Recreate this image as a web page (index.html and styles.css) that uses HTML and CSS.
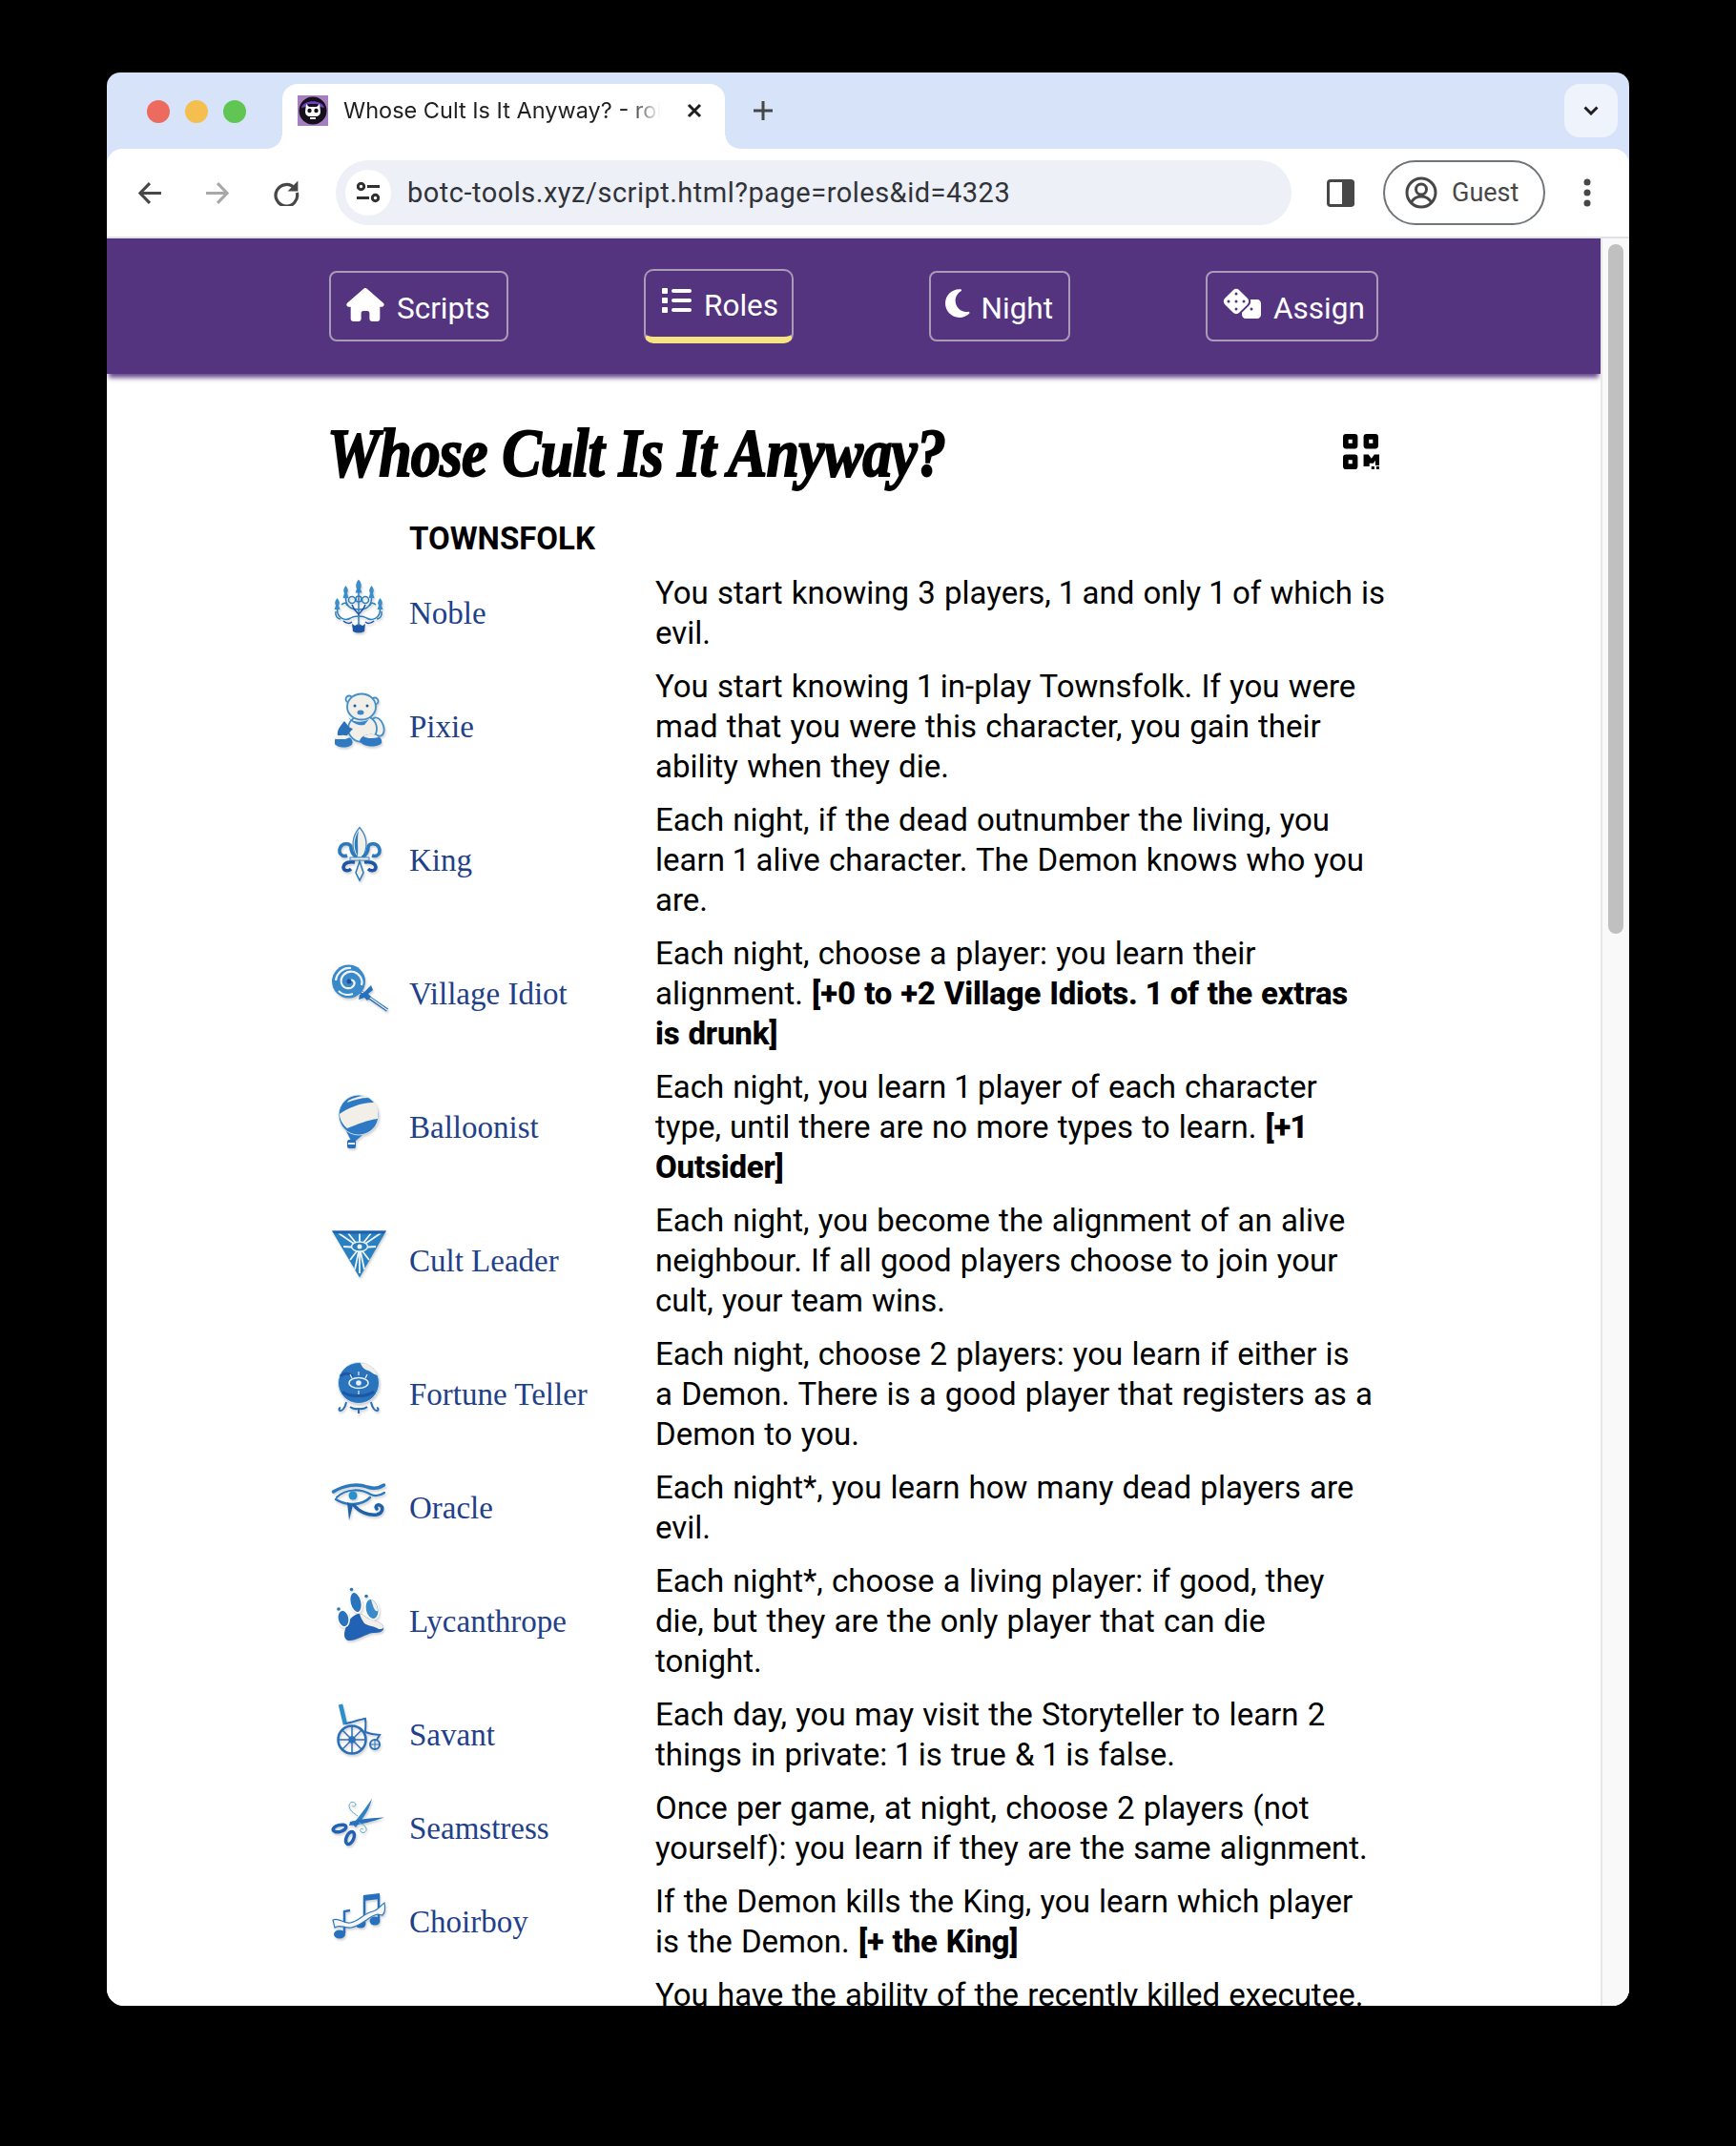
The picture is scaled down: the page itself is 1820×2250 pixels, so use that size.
FILE: index.html
```html
<!DOCTYPE html>
<html lang="en">
<head>
<meta charset="utf-8">
<title>Whose Cult Is It Anyway? - roles</title>
<link rel="stylesheet" href="styles.css">
</head>
<body>
<div class="window">
  <div class="tabstrip">
    <div class="lights"><i class="light red"></i><i class="light yellow"></i><i class="light green"></i></div>
    <div class="tab">
      <svg class="favicon" viewBox="0 0 32 32"><rect width="32" height="32" fill="#a57fbe"/><circle cx="16" cy="16" r="14.500" fill="#15101c"/><path d="M4 13C6 4 26 4 28 13l-5-1-2-3H11l-2 3z" fill="#6d42c4"/><path d="M9 9l3 3h8l3-3 1 8c0 3-2 5-5 5v3h-6v-3c-3 0-5-2-5-5z" fill="#fff"/><circle cx="12.500" cy="16" r="2.200" fill="#15101c"/><circle cx="19.500" cy="16" r="2.200" fill="#15101c"/><path d="M13 22.500h6" stroke="#15101c"/></svg>
      <span class="tab-title">Whose Cult Is It Anyway? - roles</span>
      <svg class="tab-close" viewBox="0 0 16 16"><path d="M2 2l12 12M14 2L2 14"/></svg>
    </div>
    <svg class="new-tab" viewBox="0 0 22 22"><path d="M11 1v20M1 11h20"/></svg>
    <div class="tab-menu"><svg class="chev" viewBox="0 0 16 10"><path d="M1.500 1.500L8 8l6.500-6.500"/></svg></div>
  </div>

  <div class="toolbar">
    <div class="tool"><svg class="tool-ico" viewBox="0 0 24 24"><path d="M23 12H2M11.500 2L1.800 12l9.700 10"/></svg></div>
    <div class="tool"><svg class="tool-ico dim" viewBox="0 0 24 24"><path d="M1 12h21M12.500 2l9.700 10-9.700 10"/></svg></div>
    <div class="tool"><svg class="tool-ico reload" viewBox="0 0 26 26"><path d="M21.500 9A10.500 10.500 0 1 0 23.500 13"/><path class="solid" d="M24.500 1.500v10h-10z"/></svg></div>
    <div class="omnibox">
      <div class="site-info"><svg class="tune" viewBox="0 0 24 22"><circle cx="4.500" cy="4.500" r="3.200"/><path d="M11 4.500h13M0 16.500h13"/><circle cx="19.500" cy="16.500" r="3.200"/></svg></div>
      <span class="url">botc-tools.xyz/script.html?page=roles&amp;id=4323</span>
    </div>
    <svg class="side-panel" viewBox="0 0 29 29"><rect x="1.500" y="1.500" width="26" height="26" rx="2.500" fill="#fff" stroke="#474747" stroke-width="3"/><path d="M16 1h10.500A2.500 2.500 0 0 1 29 3.500v22a2.500 2.500 0 0 1-2.500 2.500H16z" fill="#474747"/></svg>
    <div class="guest">
      <svg class="avatar" viewBox="0 0 34 34"><circle cx="17" cy="17" r="15"/><circle cx="17" cy="13.500" r="5.500"/><path d="M6.500 27c3-5 7-6 10.500-6s7.500 1 10.500 6"/></svg>
      <span>Guest</span>
    </div>
    <svg class="dots" viewBox="0 0 8 30"><circle cx="4" cy="4" r="3.500"/><circle cx="4" cy="15" r="3.500"/><circle cx="4" cy="26" r="3.500"/></svg>
  </div>

  <div class="viewport">
    <div class="page">
      <nav class="nav">
        <div class="nav-inner">
          <a class="nav-btn btn-scripts"><svg class="ico-house" viewBox="0 0 576 512"><path d="M575.800 255.500c0 18-15 32.100-32 32.100h-32l.7 160.200c0 2.700-.2 5.400-.5 8.100V472c0 22.100-17.900 40-40 40H456c-1.100 0-2.200 0-3.300-.1c-1.400 .1-2.800 .1-4.200 .1H416 392c-22.100 0-40-17.900-40-40V448 384c0-17.700-14.300-32-32-32H256c-17.700 0-32 14.300-32 32v64 24c0 22.100-17.900 40-40 40H160 128.100c-1.500 0-3-.1-4.500-.2c-1.200 .1-2.400 .2-3.600 .2H104c-22.100 0-40-17.900-40-40V360c0-.9 0-1.900 .1-2.800V287.600H32c-18 0-32-14-32-32.100c0-9 3-17 10-24L266.400 8c7-7 15-8 22-8s15 2 21 7L564.800 231.500c8 7 12 15 11 24z"/></svg><span>Scripts</span></a>
          <a class="nav-btn btn-roles"><svg class="ico-list" viewBox="0 0 31 26"><rect width="6" height="6" rx="1"/><rect y="10" width="6" height="6" rx="1"/><rect y="20" width="6" height="6" rx="1"/><rect x="10" y="1" width="21" height="4" rx="2"/><rect x="10" y="11" width="21" height="4" rx="2"/><rect x="10" y="21" width="21" height="4" rx="2"/></svg><span>Roles</span></a>
          <a class="nav-btn btn-night"><svg class="ico-moon" viewBox="0 32 384 448"><path d="M223.500 32C100 32 0 132.300 0 256S100 480 223.500 480c60.600 0 115.500-24.200 155.800-63.400c5-4.900 6.300-12.500 3.100-18.700s-10.100-9.700-17-8.500c-9.800 1.700-19.800 2.600-30.100 2.600c-96.900 0-175.500-78.800-175.500-176c0-65.800 36-123.100 89.300-153.300c6.100-3.500 9.200-10.500 7.700-17.300s-7.300-11.900-14.300-12.500c-6.300-.5-12.600-.8-19-.8z"/></svg><span>Night</span></a>
          <a class="nav-btn btn-assign"><svg class="ico-dice" viewBox="0 0 640 512"><path d="M274.900 34.300c-28.100-28.100-73.700-28.100-101.800 0L34.300 173.100c-28.100 28.100-28.100 73.700 0 101.800L173.100 413.700c28.100 28.100 73.700 28.100 101.800 0L413.700 274.900c28.100-28.100 28.100-73.700 0-101.800L274.900 34.300zM200 224a24 24 0 1 1 48 0 24 24 0 1 1 -48 0zM96 200a24 24 0 1 1 0 48 24 24 0 1 1 0-48zM224 376a24 24 0 1 1 0-48 24 24 0 1 1 0 48zM352 200a24 24 0 1 1 0 48 24 24 0 1 1 0-48zM224 120a24 24 0 1 1 0-48 24 24 0 1 1 0 48zm96 328c0 35.300 28.700 64 64 64H576c35.300 0 64-28.700 64-64V256c0-35.300-28.700-64-64-64H461.700c11.600 36 3.100 77-25.400 105.500L320 413.800V448zM480 328a24 24 0 1 1 0 48 24 24 0 1 1 0-48z"/></svg><span>Assign</span></a>
        </div>
      </nav>

      <main class="content">
        <div class="title-row">
          <h1 class="title">Whose Cult Is It Anyway?</h1>
          <svg class="qr" viewBox="0 0 38 37"><path fill-rule="evenodd" d="M3 1h9a3 3 0 0 1 3 3v9a3 3 0 0 1-3 3H3a3 3 0 0 1-3-3V4a3 3 0 0 1 3-3zm2.500 5.500v4h4v-4zM24 1h9a3 3 0 0 1 3 3v9a3 3 0 0 1-3 3h-9a3 3 0 0 1-3-3V4a3 3 0 0 1 3-3zm2.500 5.500v4h4v-4zM3 22h9a3 3 0 0 1 3 3v9a3 3 0 0 1-3 3H3a3 3 0 0 1-3-3v-9a3 3 0 0 1 3-3zm2.500 5.500v4h4v-4zM21 22h5l3 4 3-4h5v11h-4v-5l-2 3h-4v3h-6z"/><path d="M29 34h3v3h-3zM34 34h3v3h-3z"/></svg>
        </div>

        <h2 class="team">TOWNSFOLK</h2>

        <div class="role">
          <svg class="art" viewBox="0 0 64 64"><g fill="#3a8fcb"><path d="M31 3.500c3 3.500 3.500 7 2 10l1.500 4h-7l1.500-4c-1.500-3-1-6.500 2-10z"/><path d="M17.500 10c2.500 3 3 5.500 1.500 8l1.500 5h-6l1.500-5c-1.500-2.500-1-5 1.500-8z"/><path d="M44.500 10c2.500 3 3 5.500 1.500 8l1.500 5h-6l1.500-5c-1.500-2.500-1-5 1.500-8z"/><path d="M8.500 23c2.500 3 3 5.500 1.500 8l1.500 4h-6l1.500-4c-1.500-2.500-1-5 1.500-8z"/><path d="M53.500 23c2.500 3 3 5.500 1.500 8l1.500 4h-6l1.500-4c-1.500-2.500-1-5 1.500-8z"/><path fill="#1d56a5" d="M24 50l3 2 4-2 4 2 3-2-1 8c-4 2-8 2-12 0z"/></g><g fill="none" stroke="#2a7fc2" stroke-width="1.500"><path d="M31 14v38"/><path d="M17.500 23c0 8 5 12 13.500 12s13.500-4 13.500-12"/><path d="M8.500 35c0 10 9 12 14 9 3-2 5-2 8.500-2s5.500 0 8.500 2c5 3 14 1 14-9"/><path d="M7 37c-1 5 2 8 5 8M55 37c1 5-2 8-5 8"/><circle cx="24" cy="25" r="3.500"/><circle cx="38" cy="25" r="3.500"/><circle cx="31" cy="24" r="3"/><path d="M13 30c3-3 6-2 6 1M49 30c-3-3-6-2-6 1"/><path d="M24 30c2 6 5 8 7 10 2-2 5-4 7-10" stroke="#1d56a5"/><path d="M15 47c3 3 7 3 9 1M47 47c-3 3-7 3-9 1" stroke="#1d56a5"/></g></svg>
          <a class="name">Noble</a>
          <p class="ability">You start knowing 3 players, 1 and only 1 of which is<br>evil.</p>
        </div>

        <div class="role">
          <svg class="art" viewBox="0 0 64 64"><g stroke="#3f8fcb" stroke-width="1.800" fill="#f1efe8"><circle cx="21" cy="10" r="3.500"/><circle cx="48" cy="12" r="3.500"/><ellipse cx="51" cy="39" rx="6" ry="10" transform="rotate(-20 51 39)"/><ellipse cx="35" cy="41" rx="15" ry="14"/><ellipse cx="34" cy="18" rx="15" ry="13.500"/></g><path d="M16 33c-4 5-8 9-7 15l9 1 7-8c-5-1-6-5-9-8z" fill="#2a70bb"/><path d="M20 29c6 6 16 6 22 2l-5 6c-6 1-12-1-17-8z" fill="#3a86c6"/><path d="M6 53c1-4 9-5 15-3 4 2 5 7 1 9-6 3-14 1-16-2z" fill="#2f7ac2"/><path d="M7 50c4-3 11-3 15 0l-5 2-10 0z" fill="#f1efe8"/><path d="M32 54c1-5 8-8 14-7 7 1 10 5 9 9-3 5-19 5-23-2z" fill="#2f7ac2"/><path d="M36 49c5-3 12-3 16 1-5 1-11 2-16-1z" fill="#f1efe8"/><circle cx="27" cy="17" r="1.500" fill="#1d56a5"/><circle cx="40" cy="17" r="1.500" fill="#1d56a5"/><ellipse cx="33" cy="24" rx="3.500" ry="2.500" fill="#3a86c6"/></svg>
          <a class="name">Pixie</a>
          <p class="ability">You start knowing 1 in-play Townsfolk. If you were<br>mad that you were this character, you gain their<br>ability when they die.</p>
        </div>

        <div class="role">
          <svg class="art" viewBox="0 0 64 64"><path d="M32 4.500C24 14 23 25 29 36h6C41 25 40 14 32 4.500z" fill="#f1efe8" stroke="#3f86c4" stroke-width="1.200"/><path d="M31 8C26 16 25 25 30 35c1-9-1-18 1-27z" fill="#2a7fc2"/><g fill="none" stroke="#2a78bd" stroke-width="3.500"><path d="M29 36c-4-3-6-7-6-10 0-5-8-6-11-1-3 6 1 11 7 9"/><path d="M35 36c4-3 6-7 6-10 0-5 8-6 11-1 3 6-1 11-7 9"/><path d="M27 41c-5-1-11 0-12 5 0 4 5 5 8 2" stroke="#1d56a5"/><path d="M37 41c5-1 11 0 12 5 0 4-5 5-8 2" stroke="#1d56a5"/></g><rect x="22" y="36" width="20" height="3" fill="#f1efe8" stroke="#3f86c4"/><path d="M32 40l-4 12 4 8 4-8z" fill="#f1efe8" stroke="#2a78bd" stroke-width="1.500"/></svg>
          <a class="name">King</a>
          <p class="ability">Each night, if the dead outnumber the living, you<br>learn 1 alive character. The Demon knows who you<br>are.</p>
        </div>

        <div class="role">
          <svg class="art" viewBox="0 0 64 64"><path d="M32 36l29 20" stroke="#2a6fb8" stroke-width="3.500"/><path d="M33 36l28 20" stroke="#e8f0f8" stroke-width="1.200"/><circle cx="20.500" cy="26" r="17.500" fill="#3a89c9"/><g fill="none" stroke="#f1f4f7" stroke-width="2.200"><path d="M21 26c3-3 7 0 5 4-3 5-11 4-13-2-2-7 5-14 13-12 6 2 10 8 8 14"/><path d="M7 25c1-8 8-14 16-13M10 36c4 4 10 5 15 3"/></g><circle cx="21" cy="26" r="2.500" fill="#1d4f9c"/><path d="M36 38l8-8 2 5-5 4 3 3-4 4-3-3-6 2 1-5z" fill="#2670bd"/></svg>
          <a class="name">Village Idiot</a>
          <p class="ability">Each night, choose a player: you learn their<br>alignment. <b>[+0 to +2 Village Idiots. 1 of the extras<br>is drunk]</b></p>
        </div>

        <div class="role">
          <svg class="art" viewBox="0 0 64 64"><path d="M17 41l6 12h5l7-6z" fill="#2d79c3"/><rect x="19" y="52" width="9" height="9" rx="2" fill="#2670bd"/><rect x="20" y="55" width="7" height="2" fill="#f1efe8"/><circle cx="31" cy="26" r="21" fill="#2d79c3" stroke="#e9f1f8" stroke-width=".8"/><path d="M11 25C20 18 36 12 49 13c2 5 3 12 2 17-10 1-22 6-32 10-5-4-8-10-8-15z" fill="#f1efe8"/><path d="M20 11c5-3 12-5 18-5l3 2c-7 0-15 2-22 5z" fill="#f1efe8"/></svg>
          <a class="name">Balloonist</a>
          <p class="ability">Each night, you learn 1 player of each character<br>type, until there are no more types to learn. <b>[+1<br>Outsider]</b></p>
        </div>

        <div class="role">
          <svg class="art" viewBox="0 0 64 64"><path d="M3 7.500h57L32 56.500z" fill="#2b80c1"/><g stroke="#eef4f8" stroke-width="1.800"><path d="M32 25L10 10M32 25L54 10M32 25L20 10M32 25L44 10M32 25V10M32 25L15 24M32 25L49 24M32 25L22 38M32 25L42 38M32 25V52M32 25L27 48M32 25L37 48"/></g><ellipse cx="32" cy="24" rx="8.500" ry="5" fill="#2b80c1" stroke="#eef4f8" stroke-width="1.500"/><circle cx="32" cy="24" r="2.500" fill="#eef4f8"/><path d="M3 7.500h57l-3 3H6z" fill="#1f62ac"/></svg>
          <a class="name">Cult Leader</a>
          <p class="ability">Each night, you become the alignment of an alive<br>neighbour. If all good players choose to join your<br>cult, your team wins.</p>
        </div>

        <div class="role">
          <svg class="art" viewBox="0 0 64 64"><g fill="none" stroke="#2a6fb8" stroke-width="2"><path d="M18 47c-1 6-4 9-6 9-2 0-2-3 0-3M44 47c1 6 4 9 6 9 2 0 2-3 0-3"/><path d="M22 52c3 3 15 3 18 0M31 53v6"/></g><circle cx="31" cy="27" r="21.500" fill="#2a74bd" stroke="#cfe2f2"/><path d="M33 6c8 0 15 6 18 13-5-1-7-4-10-5-4-1-7-4-8-8z" fill="#f1efe8"/><path d="M12 20c5-5 9-3 13 0M14 36c6 6 26 6 33 0" fill="none" stroke="#1d56a5" stroke-width="3"/><ellipse cx="31" cy="27" rx="10" ry="5.500" fill="none" stroke="#e8f1f8" stroke-width="1.500"/><circle cx="31" cy="27" r="2.800" fill="#e8f1f8"/><path d="M31 15v4M22 18l2 4M40 18l-2 4M31 35v4" stroke="#e8f1f8" stroke-width="1.200"/></svg>
          <a class="name">Fortune Teller</a>
          <p class="ability">Each night, choose 2 players: you learn if either is<br>a Demon. There is a good player that registers as a<br>Demon to you.</p>
        </div>

        <div class="role">
          <svg class="art" viewBox="0 0 64 64"><g fill="none" stroke="#2a78bd" stroke-linecap="round"><path d="M4.500 22C16 15 30 13 40 17c6 2 13 1 17.500-2" stroke-width="3.500"/><path d="M8 28C18 18 34 19 44 25c5 2 10 1 14-2" stroke-width="2.200"/><path d="M7 30c11 7 27 7 36-2" stroke-width="2.500"/><path d="M26 36c6 8 16 11 24 10 6-1 8-8 3-10-3-1-5 2-3 4" stroke-width="3.500" stroke="#1f62ac"/></g><circle cx="25" cy="26" r="4.500" fill="#2a8fca"/><path d="M19 33l2 19 4-16z" fill="#1f62ac"/></svg>
          <a class="name">Oracle</a>
          <p class="ability">Each night*, you learn how many dead players are<br>evil.</p>
        </div>

        <div class="role">
          <svg class="art" viewBox="0 0 64 64"><path d="M20 59c-4-1-5-6-3-12 2-8 8-16 15-16 4 0 5 3 9 5 5 2 15 3 16 9 1 5-5 6-11 6-8 1-18 9-26 8z" fill="#2262b4"/><path d="M32 31c4 0 5 3 9 5 5 2 15 3 16 9 0 2-3 2-5 2-4-3-11-3-15-6-2-3-4-6-5-10z" fill="#f1efe8"/><g stroke="#fff" stroke-width="1.500"><ellipse cx="15" cy="36" rx="6" ry="9" transform="rotate(-12 15 36)" fill="#2a74bd"/><ellipse cx="28" cy="19" rx="6" ry="11" transform="rotate(-14 28 19)" fill="#2a74bd"/><ellipse cx="45" cy="26" rx="7" ry="11" transform="rotate(-12 45 26)" fill="#3a8bcb"/></g><path d="M44 16c4 1 7 6 7 12-3 2-5-5-7-12z" fill="#f1efe8"/><circle cx="10" cy="26" r="1.800" fill="#2a74bd"/><circle cx="23.500" cy="5.500" r="1.800" fill="#2a74bd"/><circle cx="39" cy="12.500" r="1.800" fill="#2a74bd"/></svg>
          <a class="name">Lycanthrope</a>
          <p class="ability">Each night*, choose a living player: if good, they<br>die, but they are the only player that can die<br>tonight.</p>
        </div>

        <div class="role">
          <svg class="art" viewBox="0 0 64 64"><g fill="none" stroke="#2a6fb8"><circle cx="24" cy="44" r="14.500" stroke-width="2.500"/><circle cx="24" cy="44" r="3" stroke-width="1.500"/><path d="M24 30v28M10 44h28M14 34l20 20M34 34L14 54" stroke-width="1.500"/><circle cx="48" cy="49" r="5" stroke-width="2"/><path d="M48 44v10M43 49h10" stroke-width="1"/><path d="M12 7l5 21" stroke="#2a8fca" stroke-width="4.500"/><path d="M17 27c7-1 14-4 21-5 1 6 0 10 0 14 5 2 10 3 15 3l-3 5" stroke-width="2"/></g></svg>
          <a class="name">Savant</a>
          <p class="ability">Each day, you may visit the Storyteller to learn 2<br>things in private: 1 is true &amp; 1 is false.</p>
        </div>

        <div class="role">
          <svg class="art" viewBox="0 0 64 64"><path d="M45 7.500C40 16 33 24 25 35l3 3C36 28 43 18 45 7.500z" fill="#3080c4"/><path d="M58 27.500C46 28 34 29 22 32l-1 4c12-1 25-4 37-8.500z" fill="#2670bd"/><g fill="none" stroke="#2262b4" stroke-width="3.500"><ellipse cx="11" cy="39" rx="7" ry="3.500" transform="rotate(-15 11 39)"/><ellipse cx="22" cy="49" rx="3.800" ry="7" transform="rotate(24 22 49)"/></g><g fill="none" stroke="#5aa7c8" stroke-width="1"><path d="M30 26c-4-3-9-6-9-11 0-4 6-5 7-1 0 2-3 3-4 1"/><path d="M31 33c4 1 7 3 8 6 1 4-4 6-6 3-1-2 1-4 3-2"/></g></svg>
          <a class="name">Seamstress</a>
          <p class="ability">Once per game, at night, choose 2 players (not<br>yourself): you learn if they are the same alignment.</p>
        </div>

        <div class="role">
          <svg class="art" viewBox="0 0 64 64"><g fill="#2670bd"><path d="M36 11l17-2v6l-17 2z"/><ellipse cx="11" cy="52" rx="6" ry="4.500"/><ellipse cx="33" cy="41" rx="5.500" ry="4.500"/><ellipse cx="48" cy="38" rx="5.500" ry="4.500"/></g><path d="M16 51V28l6-1M37 40V12M52 37V11" fill="none" stroke="#2670bd" stroke-width="2.500"/><path d="M4 37c7-3 10 4 18 3 9-1 14-10 24-12 5-1 8-6 12-9 1 5 1 10-2 13l-5-1c-10 2-16 12-28 14-7 1-12-4-17 0-1-3-1-5-2-8z" fill="#f4f5f4" stroke="#2a78bd" stroke-width="1.200"/></svg>
          <a class="name">Choirboy</a>
          <p class="ability">If the Demon kills the King, you learn which player<br>is the Demon. <b>[+ the King]</b></p>
        </div>

        <div class="role">
          <span></span>
          <span></span>
          <p class="ability">You have the ability of the recently killed executee.</p>
        </div>
      </main>
    </div>
    <div class="scrollbar"><div class="thumb"></div></div>
  </div>
</div>
</body>
</html>
```
FILE: styles.css
```css
* { box-sizing: border-box; }
html, body { margin: 0; height: 2250px; background: #000; overflow: hidden; }
.window { width: 1596px; height: 2027px; margin: 76px auto 0; border-radius: 14px 14px 18px 18px; overflow: hidden; background: #d6e3f8; display: flex; flex-direction: column; }

.tabstrip { height: 80px; flex: none; display: flex; align-items: flex-start; padding-left: 42px; }
.lights { display: flex; gap: 16px; margin-top: 29px; }
.light { width: 24px; height: 24px; border-radius: 50%; display: block; }
.red { background: #ec6a5e; }
.yellow { background: #f5bf4f; }
.green { background: #61c554; }
.tab { position: relative; width: 464px; height: 68px; margin: 12px 0 0 38px; background: #fff; border-radius: 16px 16px 0 0; display: flex; align-items: center; padding: 0 0 12px 16px; }
.tab::before, .tab::after { content: ""; position: absolute; bottom: 0; width: 16px; height: 16px; }
.tab::before { left: -16px; background: radial-gradient(circle at 0 0, transparent 15.500px, #fff 16px); }
.tab::after { right: -16px; background: radial-gradient(circle at 100% 0, transparent 15.500px, #fff 16px); }
.favicon { width: 32px; height: 32px; flex: none; }
.tab-title { width: 332px; margin-left: 16px; font: 23.500px/32px Inter, "Liberation Sans", sans-serif; color: #1f1f1f; white-space: nowrap; overflow: hidden; -webkit-mask-image: linear-gradient(90deg, #000 300px, transparent 332px); mask-image: linear-gradient(90deg, #000 300px, transparent 332px); }
.tab-close { width: 16px; height: 16px; margin-left: 28px; fill: none; stroke: #1f1f1f; stroke-width: 3; }
.new-tab { width: 22px; height: 22px; margin: 29px 0 0 29px; fill: none; stroke: #474747; stroke-width: 3; }
.tab-menu { width: 56px; height: 56px; margin: 12px 12px 0 auto; background: #eef3fc; border-radius: 16px; display: flex; align-items: center; justify-content: center; }
.chev { width: 16px; height: 10px; fill: none; stroke: #1f1f1f; stroke-width: 3; }

.toolbar { height: 94px; flex: none; background: #fff; border-radius: 16px 16px 0 0; border-bottom: 2px solid #e0e1e6; display: flex; align-items: center; padding: 0 0 0 10px; }
.tool { width: 71px; height: 48px; display: flex; align-items: center; justify-content: center; flex: none; }
.tool-ico { width: 25px; height: 25px; fill: none; stroke: #474747; stroke-width: 3; }
.tool-ico.dim { stroke: #a8a8a8; margin-right: 3px; }
.tool-ico.reload { width: 28px; height: 28px; }
.tool-ico .solid { fill: #474747; stroke: none; }
.omnibox { width: 1002px; height: 68px; margin-left: 17px; background: #edf0f7; border-radius: 34px; display: flex; align-items: center; padding-left: 10px; flex: none; }
.site-info { width: 48px; height: 48px; border-radius: 50%; background: #fff; display: flex; align-items: center; justify-content: center; }
.tune { width: 24px; height: 22px; fill: none; stroke: #303030; stroke-width: 3; }
.url { margin-left: 17px; font: 29px/36px Roboto, sans-serif; letter-spacing: .5px; color: #303338; white-space: nowrap; }
.side-panel { width: 29px; height: 29px; margin-left: 37px; flex: none; }
.guest { width: 170px; height: 68px; margin-left: 30px; flex: none; border: 2px solid #70757a; border-radius: 34px; display: flex; align-items: center; padding-left: 21px; gap: 15px; font: 27px/32px Roboto, sans-serif; color: #474747; }
.avatar { width: 34px; height: 34px; fill: none; stroke: #474747; stroke-width: 3; }
.dots { width: 8px; height: 30px; margin-left: 40px; fill: #474747; flex: none; }

.viewport { flex: 1; min-height: 0; display: flex; background: #fff; }
.page { flex: 1; min-width: 0; overflow: hidden; }
.scrollbar { width: 30px; flex: none; background: #f9f9f9; border-left: 2px solid #e7e7e7; padding: 6px 6px 0; }
.thumb { width: 16px; height: 723px; border-radius: 8px; background: #c0c0c0; }

.nav { height: 142px; background: #55347f; box-shadow: 0 6px 5px -2px rgba(85, 52, 127, .9); padding-top: 34px; }
.nav-inner { width: 1100px; margin: 0 auto; display: flex; justify-content: space-between; align-items: flex-start; }
.nav-btn { height: 74px; border: 2px solid #a99cb9; border-radius: 8px; display: flex; align-items: center; color: #fff; font: 31.500px/40px Roboto, sans-serif; }
.nav-btn span { margin-top: 5px; }
.nav-btn svg { fill: #fff; flex: none; }
.btn-scripts { width: 188px; padding-left: 16px; gap: 13px; }
.ico-house { width: 40px; height: 35px; margin-top: -4px; }
.btn-roles { width: 157px; height: 78px; margin-top: -2px; padding-left: 17px; gap: 13px; border-bottom: 7px solid #f7e382; border-radius: 10px; }
.ico-list { width: 31px; height: 26px; margin-top: -8px; }
.btn-night { width: 148px; padding-left: 15px; gap: 12px; }
.ico-moon { width: 25.500px; height: 30px; margin-top: -6px; }
.btn-assign { width: 181px; padding-left: 16px; gap: 13px; }
.ico-dice { width: 40px; height: 32px; margin-top: -6px; }

.content { width: 1100px; margin: 0 auto; font: 33px/42px Roboto, sans-serif; word-spacing: 1px; color: #000; }
.title-row { height: 80px; margin-top: 43px; display: flex; align-items: center; justify-content: space-between; }
.title { margin: 0 0 0 -2px; flex: none; font: italic 700 72px/80px "Liberation Serif", serif; letter-spacing: -1px; -webkit-text-stroke: 2px #000; transform: scaleX(.86); transform-origin: 0 50%; }
.qr { width: 39px; height: 38px; fill: #000; margin: -4px -2px 0 0; }
.team { margin: 29px 0 7px 84px; font: 700 33px/42px Roboto, sans-serif; word-spacing: 0; }
.role { display: grid; grid-template-columns: 84px 258px 1fr; align-items: center; padding: 7.500px 0 6.500px; }
.art { width: 64px; height: 64px; margin-top: -14px; display: block; filter: drop-shadow(1px 2px 1px rgba(0, 0, 0, .18)); }
.name { font: 33px/42px "Liberation Serif", serif; word-spacing: 0; color: #1f4189; }
.ability { margin: 0; white-space: nowrap; font-variant-numeric: proportional-nums; }
.ability b { font-weight: 800; letter-spacing: -.2px; }
```
